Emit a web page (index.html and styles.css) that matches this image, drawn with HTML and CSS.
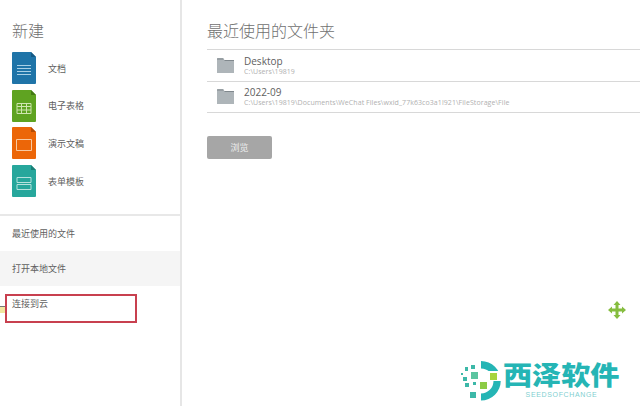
FILE: index.html
```html
<!DOCTYPE html>
<html lang="zh-CN">
<head>
    <meta charset="UTF-8">
    <title>新建</title>
    <link rel="stylesheet" href="styles.css">
</head>
<body>
    <div class="app">
        <div class="sidebar">
            <div class="new-section">
                <h2>新建</h2>
                <div class="new-item">
                    <svg class="doc-icon" viewBox="0 0 24 32"><path d="M1 0H19L24 5V31a1 1 0 0 1-1 1H1a1 1 0 0 1-1-1V1a1 1 0 0 1 1-1z" fill="#1f74a8"/><path d="M19 0L24 5H19z" fill="#155a85"/><path d="M5 13.500H19M5 16.500H19M5 19.500H19M5 22.500H19" stroke="#a9d0e6" stroke-width="1"/></svg>
                    <span>文档</span>
                </div>
                <div class="new-item">
                    <svg class="doc-icon" viewBox="0 0 24 32"><path d="M1 0H19L24 5V31a1 1 0 0 1-1 1H1a1 1 0 0 1-1-1V1a1 1 0 0 1 1-1z" fill="#5fa321"/><path d="M19 0L24 5H19z" fill="#437a14"/><path d="M5 13.500H19V23.500H5zM5 16.500H19M5 20H19M9.500 13.500V23.500M14.500 13.500V23.500" fill="none" stroke="#cfe5b0" stroke-width="1"/></svg>
                    <span>电子表格</span>
                </div>
                <div class="new-item">
                    <svg class="doc-icon" viewBox="0 0 24 32"><path d="M1 0H19L24 5V31a1 1 0 0 1-1 1H1a1 1 0 0 1-1-1V1a1 1 0 0 1 1-1z" fill="#ec6608"/><path d="M19 0L24 5H19z" fill="#b34c05"/><path d="M4.500 12.500H19.500V23.500H4.500z" fill="none" stroke="#f8c9a0" stroke-width="1"/></svg>
                    <span>演示文稿</span>
                </div>
                <div class="new-item">
                    <svg class="doc-icon" viewBox="0 0 24 32"><path d="M1 0H19L24 5V31a1 1 0 0 1-1 1H1a1 1 0 0 1-1-1V1a1 1 0 0 1 1-1z" fill="#27a79c"/><path d="M19 0L24 5H19z" fill="#1b7f76"/><path d="M5 12.500H19V17.500H5zM5 19.500H19V24.500H5z" fill="none" stroke="#b5e2dd" stroke-width="1"/></svg>
                    <span>表单模板</span>
                </div>
            </div>
            <div class="nav-item">最近使用的文件</div>
            <div class="nav-item active">打开本地文件</div>
            <div class="nav-item">连接到云</div>
            <div class="mark"></div>
            <div class="red-box"></div>
        </div>
        <div class="main">
            <h1>最近使用的文件夹</h1>
            <div class="folder-list">
                <div class="folder-row">
                    <svg class="folder-icon" viewBox="0 0 17 15"><path d="M0 1a1 1 0 0 1 1-1H6L7.500 2H17V15H0z" fill="#aeb5b9"/><path d="M0 1H6.500M7.500 2.500H17" stroke="#80888d" stroke-width="1"/></svg>
                    <div>
                        <div class="folder-name">Desktop</div>
                        <div class="folder-path">C:\Users\19819</div>
                    </div>
                </div>
                <div class="folder-row">
                    <svg class="folder-icon" viewBox="0 0 17 15"><path d="M0 1a1 1 0 0 1 1-1H6L7.500 2H17V15H0z" fill="#aeb5b9"/><path d="M0 1H6.500M7.500 2.500H17" stroke="#80888d" stroke-width="1"/></svg>
                    <div>
                        <div class="folder-name">2022-09</div>
                        <div class="folder-path">C:\Users\19819\Documents\WeChat Files\wxid_77k63co3a1l921\FileStorage\File</div>
                    </div>
                </div>
            </div>
            <button class="browse-btn">浏览</button>
        </div>
    </div>

    <svg class="move-cursor" viewBox="0 0 18 18"><path d="M9 0L12.500 4H10.500V7.500H14V5.500L18 9L14 12.500V10.500H10.500V14H12.500L9 18L5.500 14H7.500V10.500H4V12.500L0 9L4 5.500V7.500H7.500V4H5.500z" fill="#86bd3f"/></svg>

    <div class="watermark">
        <svg class="wm-logo" viewBox="0 0 40 40">
            <path d="M20 0A19.500 19.500 0 0 1 20 39.500V32.500A12.500 12.500 0 0 0 20 7.500z" fill="#25b5b5"/>
            <rect x="27" y="10" width="13" height="10" fill="white"/>
            <rect x="29" y="12" width="7" height="7" fill="#a6d43e"/>
            <rect x="10" y="11" width="7" height="7" fill="#5bc5a0"/>
            <rect x="19" y="21" width="7" height="7" fill="#8ccb45"/>
            <rect x="10" y="4" width="4" height="4" fill="#3cb8a8"/>
            <rect x="4" y="6" width="3" height="4" fill="#3cb8a8"/>
            <rect x="2" y="16" width="4" height="4" fill="#3cb8a8"/>
            <rect x="0" y="12" width="2" height="2" fill="#3cb8a8"/>
            <rect x="4" y="22" width="4" height="4" fill="#3cb8a8"/>
            <rect x="12" y="21" width="3" height="3" fill="#3cb8a8"/>
            <rect x="9" y="31" width="6" height="6" fill="#3cb8a8"/>
        </svg>
        <div class="wm-text">
            <div class="wm-title">西泽软件</div>
            <div class="wm-sub">SEEDSOFCHANGE</div>
        </div>
    </div>
</body>
</html>
```

FILE: styles.css
```css
html, body {
    margin: 0;
    height: 100%;
}
body {
    position: relative;
    overflow: hidden;
    background-color: white;
    font-family: "Open Sans", "Noto Sans CJK SC", sans-serif;
    color: #555;
}
.app {
    display: flex;
    height: 406px;
}
.sidebar {
    position: relative;
    width: 180px;
    flex-shrink: 0;
    border-right: 2px solid #e6e6e6;
}
.new-section {
    height: 216px;
    padding: 21px 0 0 12px;
    box-sizing: border-box;
    border-bottom: 2px solid #e8e8e8;
}
h2 {
    margin: 0 0 11px;
    height: 20px;
    font-size: 16px;
    line-height: 20px;
    font-weight: 300;
    color: #707070;
}
.new-item {
    display: flex;
    align-items: center;
    gap: 12px;
    height: 32px;
    margin-bottom: 5.700px;
    font-size: 9px;
    color: #606060;
}
.doc-icon {
    width: 24px;
    height: 32px;
}
.nav-item {
    height: 35px;
    padding-left: 12px;
    font-size: 9px;
    line-height: 36px;
    color: #606060;
}
.nav-item.active {
    background-color: #f5f5f5;
}
.red-box {
    position: absolute;
    left: 5px;
    top: 294px;
    width: 128px;
    height: 25px;
    border: 2px solid #c8404f;
}
.mark {
    position: absolute;
    left: 0;
    top: 306px;
    width: 5px;
    height: 7px;
    background-color: #f0e6a0;
    border-top: 1px solid #777;
    box-sizing: border-box;
}
.main {
    flex: 1;
    padding: 21px 0 0 25px;
}
h1 {
    margin: 0 0 8px;
    height: 20px;
    font-size: 16px;
    line-height: 20px;
    font-weight: 300;
    color: #707070;
}
.folder-list {
    border-top: 1px solid #d8d8d8;
}
.folder-row {
    display: flex;
    align-items: center;
    gap: 10px;
    height: 30.500px;
    padding-left: 10px;
    border-bottom: 1px solid #d8d8d8;
}
.folder-icon {
    width: 17px;
    height: 15px;
}
.folder-name {
    font-size: 10px;
    line-height: 12px;
    color: #606060;
}
.folder-path {
    font-size: 7px;
    line-height: 9px;
    letter-spacing: 0.070px;
    color: #b0b0b0;
}
.browse-btn {
    display: block;
    width: 65px;
    height: 23px;
    margin-top: 23px;
    border: none;
    border-radius: 2px;
    background-color: #a6a6a6;
    color: #eee;
    font-family: inherit;
    font-size: 9px;
}
.move-cursor {
    position: absolute;
    left: 608px;
    top: 301px;
    width: 18px;
    height: 18px;
}
.watermark {
    position: absolute;
    left: 461px;
    top: 361px;
    display: flex;
    gap: 2px;
}
.wm-logo {
    width: 40px;
    height: 40px;
}
.wm-text {
    width: 117px;
}
.wm-title {
    font-family: "Noto Sans CJK SC", sans-serif;
    font-size: 26px;
    line-height: 26px;
    font-weight: 900;
    color: #25b5b5;
    white-space: nowrap;
    transform: scaleX(1.12);
    transform-origin: left center;
}
.wm-sub {
    font-family: "Liberation Sans", sans-serif;
    font-size: 7px;
    line-height: 9px;
    margin-top: 3px;
    letter-spacing: 0.650px;
    text-align: center;
    color: #7fcfd0;
}
```
